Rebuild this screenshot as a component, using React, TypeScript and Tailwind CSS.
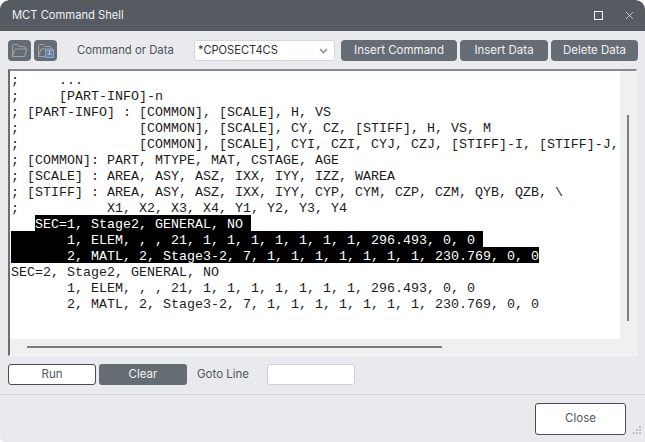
import { X } from 'lucide-react';

type Line = { text: string; selected?: boolean; indent?: boolean };

const lines: Line[] = [
  { text: ';     ...' },
  { text: ';     [PART-INFO]-n' },
  { text: '; [PART-INFO] : [COMMON], [SCALE], H, VS' },
  { text: ';               [COMMON], [SCALE], CY, CZ, [STIFF], H, VS, M' },
  { text: ';               [COMMON], [SCALE], CYI, CZI, CYJ, CZJ, [STIFF]-I, [STIFF]-J,' },
  { text: '; [COMMON]: PART, MTYPE, MAT, CSTAGE, AGE' },
  { text: '; [SCALE] : AREA, ASY, ASZ, IXX, IYY, IZZ, WAREA' },
  { text: '; [STIFF] : AREA, ASY, ASZ, IXX, IYY, CYP, CYM, CZP, CZM, QYB, QZB, \\' },
  { text: ';           X1, X2, X3, X4, Y1, Y2, Y3, Y4' },
  { text: 'SEC=1, Stage2, GENERAL, NO ', selected: true, indent: true },
  { text: '       1, ELEM, , , 21, 1, 1, 1, 1, 1, 1, 1, 296.493, 0, 0 ', selected: true },
  { text: '       2, MATL, 2, Stage3-2, 7, 1, 1, 1, 1, 1, 1, 1, 230.769, 0, 0', selected: true },
  { text: 'SEC=2, Stage2, GENERAL, NO' },
  { text: '       1, ELEM, , , 21, 1, 1, 1, 1, 1, 1, 1, 296.493, 0, 0' },
  { text: '       2, MATL, 2, Stage3-2, 7, 1, 1, 1, 1, 1, 1, 1, 230.769, 0, 0' },
];

function FolderIcon({ save }: { save?: boolean }) {
  return (
    <button className="flex h-[21px] w-[23px] items-center justify-center rounded-[4px] bg-[#666c73]">
      <svg width="17" height="15" viewBox="0 0 17 15" fill="none" stroke="#a0a4a9" strokeWidth="1">
        <path d="M1.5 13.5V2.5a1 1 0 0 1 1-1h4l1.5 2h5a1 1 0 0 1 1 1v1.5" />
        <path d="M1.5 13.5l2.5-7.5h12l-2.5 7.5z" />
        {save && <rect x="8.5" y="7.5" width="8" height="7" fill="#6b7f9a" stroke="#7fa8dc" />}
        {save && <path d="M12.5 8v4M10.5 10l2 2 2-2" stroke="#a5c8f0" />}
      </svg>
    </button>
  );
}

function DarkButton({ label, className }: { label: string; className: string }) {
  return (
    <button className={`h-[21px] rounded-[4px] bg-[#666c73] text-[11.5px] text-[#f0f1f3] ${className}`}>
      {label}
    </button>
  );
}

export default function App() {
  return (
    <div className="flex h-[442px] w-[645px] flex-col overflow-hidden rounded-t-[9px] rounded-bl-[5px] bg-[#e8eaee] font-['Inter',sans-serif] text-[11.5px]">
      {/* Title bar */}
      <div className="flex h-[31px] shrink-0 items-center justify-between rounded-t-[9px] bg-[#565b62] pl-[12px] pr-[9px] text-[#eef0f2]">
        <span className="text-[11.2px]">MCT Command Shell</span>
        <div className="flex items-center gap-[20px]">
          <div className="h-[9px] w-[9px] border border-[#f2f3f4]" />
          <X size={13} strokeWidth={1.2} color="#f2f3f4" />
        </div>
      </div>

      {/* Toolbar */}
      <div className="flex h-[38px] shrink-0 items-start pl-[8px] pr-[7px] pt-[9px]">
        <div className="flex gap-[3px]">
          <FolderIcon />
          <FolderIcon save />
        </div>
        <span className="ml-[20px] w-[117px] whitespace-nowrap text-[11.3px] leading-[21px] text-[#4d535a]">Command or Data</span>
        <div className="flex h-[21px] w-[141px] items-center justify-between rounded-[3px] border border-[#d3d6db] bg-white pl-[3px] pr-[6px] text-[11.1px] text-[#2c2f33]">
          <span>*CPOSECT4CS</span>
          <svg width="9" height="6" viewBox="0 0 9 6" fill="none" stroke="#8a8e93" strokeWidth="1.6">
            <path d="M1 1l3.5 3.5L8 1" />
          </svg>
        </div>
        <DarkButton label="Insert Command" className="ml-[6px] w-[116px]" />
        <DarkButton label="Insert Data" className="ml-[3px] w-[88px]" />
        <DarkButton label="Delete Data" className="ml-[3px] w-[87px]" />
      </div>

      {/* Editor */}
      <div className="mx-[8px] flex h-[287px] shrink-0 flex-col border-b border-l-2 border-r border-t-2 border-b-[#f6f7f8] border-l-[#6e6e6e] border-r-[#f6f7f8] border-t-[#8a8a8a] bg-[#f0f0f0]">
        <div className="flex min-h-0 flex-1">
          <div className="min-w-0 flex-1 overflow-hidden bg-white pl-[1px] font-['Liberation_Mono',monospace] text-[13.33px] leading-[20px] text-[#1c1c1c]">
            {lines.map((line, i) => (
              <div key={i} className={`h-[16px] whitespace-pre ${line.indent ? 'pl-[24px]' : ''}`}>
                <span className={`inline-block h-[16px] align-top ${line.selected ? 'bg-black text-white' : ''}`}>{line.text}</span>
              </div>
            ))}
          </div>
          <div className="flex w-[16px] shrink-0 pb-[18px] pl-[7px] pt-[44px]">
            <div className="h-full w-[2px] bg-[#7d7d7d]" />
          </div>
        </div>
        <div className="flex h-[16px] shrink-0 items-center pl-[17px]">
          <div className="h-[2px] w-[415px] bg-[#7d7d7d]" />
        </div>
      </div>

      {/* Run row */}
      <div className="flex h-[39px] shrink-0 items-center border-b border-[#cfd2d7] pl-[8px] pb-[1px]">
        <button className="h-[21px] w-[88px] rounded-[3px] border border-[#4a4e54] bg-white text-[#50565d]">Run</button>
        <button className="ml-[3px] h-[21px] w-[88px] rounded-[3px] bg-[#666c73] text-[#f0f1f3]">Clear</button>
        <span className="ml-[10px] w-[70px] text-[#50565d]">Goto Line</span>
        <input className="h-[21px] w-[88px] rounded-[3px] border border-[#cdd0d5] bg-white" />
      </div>

      {/* Footer */}
      <div className="relative flex flex-1 items-start justify-end pr-[19px] pt-[8px]">
        <button className="h-[32px] w-[91px] rounded-[3px] border border-[#4a4e54] bg-white text-[#50565d]">Close</button>
        <div className="absolute bottom-[8px] right-[4px] grid grid-cols-3 gap-[1px]">
          {[0, 0, 1, 0, 1, 1, 1, 1, 1].map((on, i) => (
            <div key={i} className={`h-[2px] w-[2px] ${on ? 'bg-[#c0c3c8]' : ''}`} />
          ))}
        </div>
      </div>
    </div>
  );
}
